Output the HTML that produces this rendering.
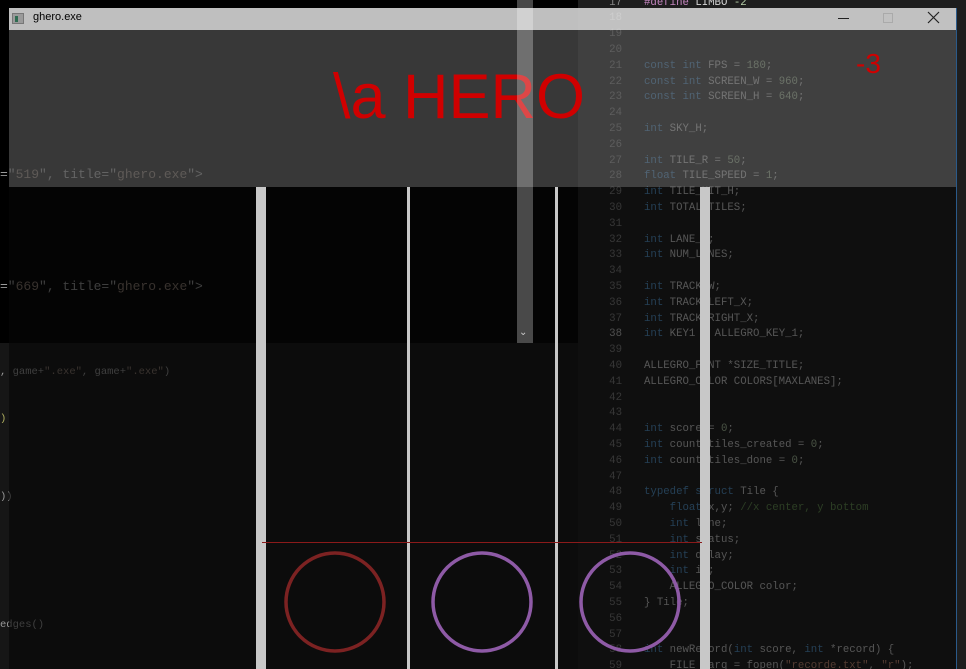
<!DOCTYPE html>
<html style="width:966px;height:669px;overflow:hidden"><head><meta charset="utf-8"><style>
*{margin:0;padding:0;box-sizing:border-box}
body{width:966px;height:669px;overflow:hidden;background:#1b1b1b;position:relative;font-family:"Liberation Sans",sans-serif}
.a{position:absolute}
.code{position:absolute;left:0;top:0;width:966px;height:669px;overflow:hidden;font-family:"Liberation Mono",monospace;font-size:10.7px;color:#d4d4d4;white-space:pre}
.ln{position:absolute;left:590px;width:32px;text-align:right;color:#858585}
.cl{position:absolute;left:644px}
.k{color:#569cd6}.p{color:#c586c0}.s{color:#ce9178}.c{color:#6a9955}.n{color:#b5cea8}
.lt{position:absolute;left:0;font-family:"Liberation Mono",monospace;white-space:pre;color:#9a9a9a}
.lt .s{color:#8a7a70}
</style></head><body>
<div class="a" style="left:0;top:0;width:578px;height:669px;background:#000"></div>
<div class="a" style="left:0;top:343px;width:578px;height:326px;background:#161616"></div>
<div class="a" style="left:578px;top:0;width:388px;height:669px;background:#1e1e1e"></div>
<div class="code" id="code"></div>
<div class="lt" style="top:167px;font-size:13px">="<span class="s">519</span>", title="<span class="s">ghero.exe</span>"&gt;</div>
<div class="lt" style="top:279px;font-size:13px">="<span class="s">669</span>", title="<span class="s">ghero.exe</span>"&gt;</div>
<div class="lt" style="top:366px;font-size:10.5px">, game+<span class="s">".exe"</span>, game+<span class="s">".exe"</span>)</div>
<div class="lt" style="top:413px;font-size:10.5px;color:#b0b060">)</div>
<div class="lt" style="top:491px;font-size:10.5px">))</div>
<div class="lt" style="top:619px;font-size:10.5px">edges()</div>
<div class="a" style="left:9px;top:8px;width:948px;height:22px;background:rgba(205,205,205,0.93)"></div>
<div class="a" style="left:12px;top:13px;width:12px;height:11px;border:1px solid #777;background:#9a9a9a"><div style="position:absolute;left:2px;top:2px;width:3px;height:6px;background:#2e6b50"></div></div>
<div class="a" style="left:33px;top:11px;font-size:11px;color:#000">ghero.exe</div>
<div class="a" style="left:838px;top:18px;width:11px;height:1px;background:#222"></div>
<div class="a" style="left:883px;top:13px;width:10px;height:10px;border:1px solid #aaa"></div>
<svg class="a" style="left:927px;top:11px" width="13" height="13"><path d="M1 1L12 12M12 1L1 12" stroke="#222" stroke-width="1.2"/></svg>
<div class="a" style="left:9px;top:30px;width:948px;height:157px;background:rgba(78,78,78,0.72)"></div>
<div class="a" style="left:9px;top:187px;width:948px;height:482px;background:rgba(6,6,6,0.62)"></div>
<div class="a" style="left:956px;top:8px;width:1px;height:661px;background:#2a5a8a"></div>
<div class="a" style="left:333px;top:66px;font-size:63px;color:#d00000;line-height:1">\a HERO</div>
<div class="a" style="left:856px;top:50px;font-size:28px;color:#d00000;line-height:1">-3</div>
<div class="a" style="left:256px;top:187px;width:10px;height:482px;background:#c8c8c8"></div>
<div class="a" style="left:407px;top:187px;width:3px;height:482px;background:#c8c8c8"></div>
<div class="a" style="left:555px;top:187px;width:3px;height:482px;background:#c8c8c8"></div>
<div class="a" style="left:700px;top:187px;width:10px;height:482px;background:#c8c8c8"></div>
<div class="a" style="left:262px;top:542px;width:440px;height:1px;background:#8b1a1a"></div>
<svg class="a" style="left:0;top:0" width="966" height="669">
<circle cx="335" cy="602" r="49" fill="none" stroke="#7c2222" stroke-width="3.5"/>
<circle cx="482" cy="602" r="49" fill="none" stroke="#8e5aa6" stroke-width="3.5"/>
<circle cx="630" cy="602" r="49" fill="none" stroke="#8e5aa6" stroke-width="3.5"/>
</svg>
<div class="a" style="left:517px;top:0;width:16px;height:343px;background:rgba(255,255,255,0.28)"></div>
<div class="a" style="left:519px;top:327px;font-size:10px;color:#ccc">⌄</div>
<script>
var L={17:'<span class="p">#define</span> LIMBO <span class="n">-2</span>',
21:'<span class="k">const int</span> FPS = <span class="n">180</span>;',
22:'<span class="k">const int</span> SCREEN_W = <span class="n">960</span>;',
23:'<span class="k">const int</span> SCREEN_H = <span class="n">640</span>;',
25:'<span class="k">int</span> SKY_H;',
27:'<span class="k">int</span> TILE_R = <span class="n">50</span>;',
28:'<span class="k">float</span> TILE_SPEED = <span class="n">1</span>;',
29:'<span class="k">int</span> TILE_HIT_H;',30:'<span class="k">int</span> TOTAL_TILES;',
32:'<span class="k">int</span> LANE_W;',33:'<span class="k">int</span> NUM_LANES;',
35:'<span class="k">int</span> TRACK_W;',36:'<span class="k">int</span> TRACK_LEFT_X;',37:'<span class="k">int</span> TRACK_RIGHT_X;',
38:'<span class="k">int</span> KEY1 = ALLEGRO_KEY_1;',
40:'ALLEGRO_FONT *SIZE_TITLE;',41:'ALLEGRO_COLOR COLORS[MAXLANES];',
44:'<span class="k">int</span> score = <span class="n">0</span>;',
45:'<span class="k">int</span> count_tiles_created = <span class="n">0</span>;',
46:'<span class="k">int</span> count_tiles_done = <span class="n">0</span>;',
48:'<span class="k">typedef struct</span> Tile {',
49:'    <span class="k">float</span> x,y; <span class="c">//x center, y bottom</span>',
50:'    <span class="k">int</span> lane;',51:'    <span class="k">int</span> status;',52:'    <span class="k">int</span> delay;',53:'    <span class="k">int</span> id;',
54:'    ALLEGRO_COLOR color;',55:'} Tile;',
58:'<span class="k">int</span> newRecord(<span class="k">int</span> score, <span class="k">int</span> *record) {',
59:'    FILE *arq = fopen(<span class="s">"recorde.txt"</span>, <span class="s">"r"</span>);'};
var h='';
for(var n=17;n<=59;n++){var y=(3.5+(n-17)*15.8-7).toFixed(1);
h+='<div class="ln" style="top:'+y+'px'+((n==18||n==38)?';color:#c6c6c6':'')+'">'+n+'</div>';
if(L[n])h+='<div class="cl" style="top:'+y+'px">'+L[n]+'</div>';}
document.getElementById('code').innerHTML=h;
</script>
</body></html>
